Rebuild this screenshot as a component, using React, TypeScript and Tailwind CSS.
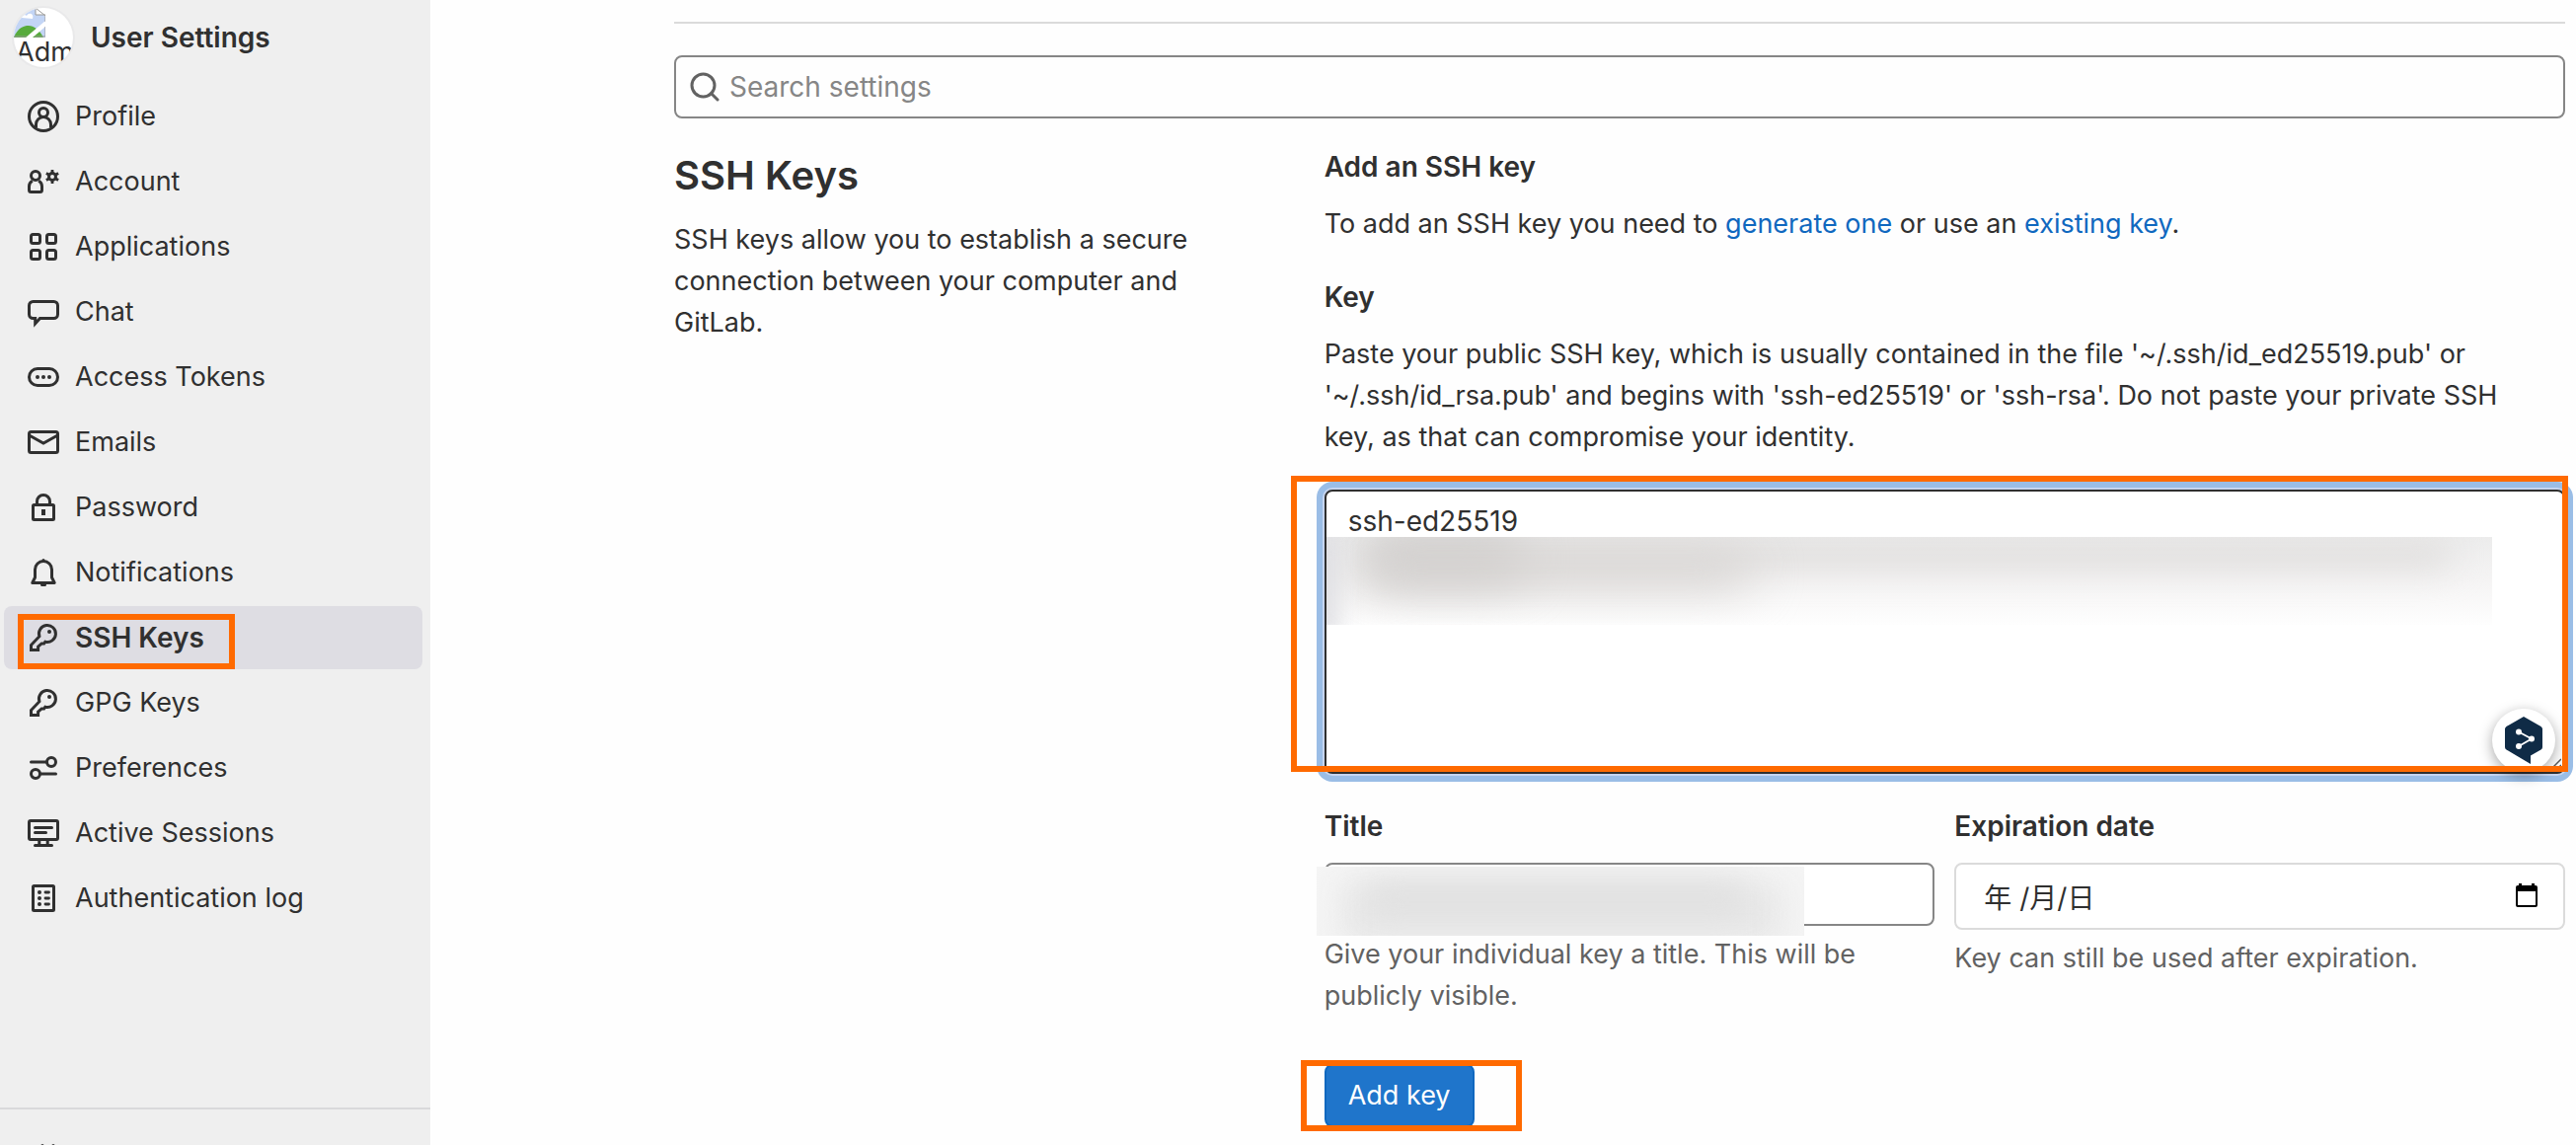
import type { ReactNode } from "react";

type NavItem = { label: string; icon: ReactNode; active?: boolean };

function Icon({ children }: { children: ReactNode }) {
  return (
    <svg
      viewBox="0 0 16 16"
      className="size-8 shrink-0"
      fill="none"
      stroke="currentColor"
      strokeWidth="1.5"
      aria-hidden="true"
    >
      {children}
    </svg>
  );
}

const keyIcon = (
  <Icon>
    <path d="M5.95 7.35A4.25 4.25 0 1 1 8.9 10.1L8.3 11H7.1L5.3 12.6V14.25H1.75V11.75L5.95 7.35Z" />
    <circle cx="11" cy="5" r="1" fill="currentColor" stroke="none" />
  </Icon>
);

const navItems: NavItem[] = [
  {
    label: "Profile",
    icon: (
      <Icon>
        <circle cx="8" cy="8" r="7.25" />
        <circle cx="8" cy="6" r="2.25" />
        <path d="M4.25 13.75V12a3.75 3.75 0 0 1 7.5 0v1.75" />
      </Icon>
    ),
  },
  {
    label: "Account",
    icon: (
      <Icon>
        <circle cx="4" cy="5" r="2.25" />
        <path d="M2.4 7.6A3.25 3.25 0 0 0 .75 10.5v1.75a1 1 0 0 0 1 1h4.5a1 1 0 0 0 1-1V10.5A3.25 3.25 0 0 0 5.6 7.6" />
        <circle cx="12.5" cy="5.5" r="1.75" />
        <path strokeWidth="1.4" d="M12.5 2v1.5M12.5 7.5V9M9.45 3.75l1.3.75M14.25 6.5l1.3.75M9.45 7.25l1.3-.75M14.25 4.5l1.3-.75" />
      </Icon>
    ),
  },
  {
    label: "Applications",
    icon: (
      <Icon>
        <rect x="1.75" y="1.75" width="4.5" height="4.5" rx="1" />
        <rect x="9.75" y="1.75" width="4.5" height="4.5" rx="1" />
        <rect x="1.75" y="9.75" width="4.5" height="4.5" rx="1" />
        <rect x="9.75" y="9.75" width="4.5" height="4.5" rx="1" />
      </Icon>
    ),
  },
  {
    label: "Chat",
    icon: (
      <Icon>
        <path d="M2.75 2.75h10.5a2 2 0 0 1 2 2v4.5a2 2 0 0 1-2 2H6.25L3.85 13.9v-2.65h-1.1a2 2 0 0 1-2-2v-4.5a2 2 0 0 1 2-2Z" />
      </Icon>
    ),
  },
  {
    label: "Access Tokens",
    icon: (
      <Icon>
        <rect x=".75" y="3.75" width="14.5" height="8.5" rx="4.25" />
        <g fill="currentColor" stroke="none">
          <circle cx="5" cy="8" r="1" />
          <circle cx="8" cy="8" r="1" />
          <circle cx="11" cy="8" r="1" />
        </g>
      </Icon>
    ),
  },
  {
    label: "Emails",
    icon: (
      <Icon>
        <rect x=".75" y="2.75" width="14.5" height="10.5" rx="1" />
        <path d="M1 4.6l7 3.9 7-3.9" />
      </Icon>
    ),
  },
  {
    label: "Password",
    icon: (
      <Icon>
        <rect x="2.75" y="6.75" width="10.5" height="7.5" rx=".5" />
        <path d="M4.75 6.75V5a3.25 3.25 0 0 1 6.5 0v1.75" />
        <rect x="7" y="9" width="2" height="3" fill="currentColor" stroke="none" />
      </Icon>
    ),
  },
  {
    label: "Notifications",
    icon: (
      <Icon>
        <path strokeLinejoin="round" d="M3.75 6.5a4.25 4.25 0 0 1 8.5 0V10.5l1.35 2.75H2.4L3.75 10.5Z" />
        <path strokeLinecap="round" d="M8 1.75V2M7.25 14.25h1.5" />
      </Icon>
    ),
  },
  { label: "SSH Keys", icon: keyIcon, active: true },
  { label: "GPG Keys", icon: keyIcon },
  {
    label: "Preferences",
    icon: (
      <Icon>
        <circle cx="12" cy="5" r="2.25" />
        <circle cx="4" cy="11" r="2.25" />
        <path strokeLinecap="round" d="M1.75 5h8M6.25 11h8" />
      </Icon>
    ),
  },
  {
    label: "Active Sessions",
    icon: (
      <Icon>
        <rect x=".75" y="1.75" width="14.5" height="9.5" rx=".75" />
        <path strokeLinecap="round" d="M3.75 5.25h8.5M3.75 7.75h5.5M3.75 14.25h8.5" />
        <path d="M5.9 11.5v2.5M10.1 11.5v2.5" />
      </Icon>
    ),
  },
  {
    label: "Authentication log",
    icon: (
      <Icon>
        <rect x="2.75" y="1.75" width="10.5" height="12.5" rx=".5" />
        <path strokeLinecap="round" d="M9 5h1.75M9 8h1.75M9 11h1.75" strokeWidth="1.4" />
        <g fill="currentColor" stroke="none">
          <circle cx="6" cy="5" r="1" />
          <circle cx="6" cy="8" r="1" />
          <circle cx="6" cy="11" r="1" />
        </g>
      </Icon>
    ),
  },
];

function Avatar() {
  return (
    <div className="size-[60px] shrink-0 overflow-hidden rounded-full bg-white ring-2 ring-[#e9e9ea]">
      <svg viewBox="0 0 32 30" className="h-[30px] w-8" aria-hidden="true">
        <path d="M0 0H22L32 9V30H0Z" fill="#c3d5f5" />
        <path d="M8 10c0-3 3-4 5-2 2-4 8-2 6 3Z" fill="#fff" />
        <path d="M0 30C4 20 10 18 15 18S26 22 30 30Z" fill="#57ab3c" />
        <path d="M12 30L32 13V19L19 30Z" fill="#fff" />
        <path d="M22 0V7H32" fill="#fff" stroke="#999" />
        <path d="M22 0L32 8V14M32 19V29H21M13 29H0" fill="none" stroke="#999" />
      </svg>
      <span className="block pl-0.5 leading-[30px]">Adm</span>
    </div>
  );
}

function Sidebar() {
  return (
    <aside className="flex w-[436px] shrink-0 flex-col overflow-hidden bg-[#efefef]">
      <div className="flex items-center gap-[18px] px-[14px] pt-2">
        <Avatar />
        <span className="text-[28px] leading-[42px] font-semibold">User Settings</span>
      </div>
      <nav className="mt-[18px] flex flex-1 flex-col gap-0.5 px-1 pr-2" aria-label="User settings">
        {navItems.map((item) => (
          <a
            key={item.label}
            href="#"
            aria-current={item.active ? "page" : undefined}
            className={
              item.active
                ? "relative flex h-16 items-center gap-4 rounded-lg bg-[#dedde3] px-6 text-[28px] font-semibold"
                : "relative flex h-16 items-center gap-4 rounded-lg px-6"
            }
          >
            {item.icon}
            {item.label}
            {item.active && (
              <span className="absolute bottom-0 left-[14px] h-14 w-[220px] border-[6px] border-[#ff6a00]" />
            )}
          </a>
        ))}
      </nav>
      <div className="h-[38px] shrink-0 border-t-2 border-[#d9d9db] px-1 pt-[14px]">
        <button type="button" aria-label="Collapse sidebar" className="flex h-16 items-center px-6">
          <Icon>
            <path strokeLinecap="round" d="M7.5 3.25L2.75 8l4.75 4.75M13 3.25L8.25 8 13 12.75" />
          </Icon>
        </button>
      </div>
    </aside>
  );
}

function AssistantBadge() {
  return (
    <button
      type="button"
      aria-label="Translate"
      className="absolute right-[10px] bottom-0.5 flex size-16 items-center justify-center rounded-full bg-white shadow-[0_4px_14px_rgba(0,0,0,0.35)]"
    >
      <svg viewBox="0 0 38 48" className="h-12 w-[38px]" aria-hidden="true">
        <path
          d="M19 0L36.500 10Q38 11 38 12.500V31Q38 32.500 36.500 33.500L26 39.500V48L1.500 33.500Q0 32.500 0 31V12.500Q0 11 1.500 10Z"
          fill="#0f2b46"
        />
        <path d="M14 15.500L27 22.500L14 30" fill="none" stroke="#fff" strokeWidth="1.800" />
        <g fill="#fff">
          <circle cx="14" cy="15.500" r="3" />
          <circle cx="27" cy="22.500" r="3" />
          <circle cx="14" cy="30" r="3" />
        </g>
      </svg>
    </button>
  );
}

function KeyField() {
  return (
    <div className="relative mt-8">
      <textarea
        id="key"
        aria-describedby="key-help"
        defaultValue="ssh-ed25519"
        className="block h-72 w-full resize-none rounded-lg border-2 border-[#303030] bg-white px-[22px] py-[9px] text-[28px] leading-[42px] shadow-[0_0_0_2px_#c6d5f0,0_0_0_8px_#9abde6] outline-none"
      />
      <div className="absolute top-12 right-[74px] left-0.5 h-[89px] overflow-hidden bg-gradient-to-b from-[#ececec] via-[#f5f4f4] to-[#fefefe]">
        <div className="absolute top-1 right-10 left-10 h-7 rounded-full bg-[#e0dedd] blur-lg" />
        <div className="absolute top-0 left-10 h-11 w-40 rounded-full bg-[#cbc9c8] blur-xl" />
        <div className="absolute top-4 left-8 h-9 w-[400px] rounded-full bg-[#d6d3d1] blur-xl" />
        <div className="absolute -top-2 -left-5 h-28 w-8 bg-[#dedee2] blur-md" />
      </div>
      <AssistantBadge />
      <svg viewBox="0 0 12 12" className="absolute right-1 bottom-1 size-3 text-[#555]" aria-hidden="true">
        <path d="M1 12L12 1M7 12L12 7" stroke="currentColor" strokeWidth="1.500" />
      </svg>
      <div className="pointer-events-none absolute -top-[14px] -right-[3px] bottom-0.5 -left-[34px] border-[6px] border-[#ff6a00]" />
    </div>
  );
}

function KeyDetails() {
  return (
    <div className="mt-8 grid grid-cols-2 gap-5">
      <div>
        <label htmlFor="title" className="block text-[28px] font-semibold">
          Title
        </label>
        <div className="relative mt-4">
          <input
            id="title"
            type="text"
            aria-describedby="title-help"
            className="block h-16 w-full rounded-lg border-2 border-[#868686] bg-white px-[22px] outline-none"
          />
          <div className="absolute top-1 -left-2 h-[70px] w-[494px] overflow-hidden bg-[#f5f5f5]">
            <div className="absolute top-4 left-6 h-16 w-[450px] bg-[#e8e8e8] blur-lg" />
            <div className="absolute top-4 left-12 h-8 w-[390px] rounded-full bg-[#dfdfdf] blur-lg" />
          </div>
        </div>
        <p id="title-help" className="mt-2 text-[#626262]">
          Give your individual key a title. This will be publicly visible.
        </p>
      </div>
      <div>
        <label htmlFor="expires" className="block text-[28px] font-semibold">
          Expiration date
        </label>
        <div className="relative mt-4">
          <input
            id="expires"
            type="text"
            aria-describedby="expires-help"
            defaultValue="年 /月/日"
            className="block h-[68px] w-full rounded-lg border-2 border-[#dbdbdb] bg-white px-7 text-[28px] outline-none"
          />
          <button
            type="button"
            aria-label="Choose a date"
            className="absolute top-[21px] right-7 flex h-6 w-[22px] items-center justify-center text-black"
          >
            <svg viewBox="0 0 22 24" className="h-6 w-[22px]" aria-hidden="true">
              <path
                fill="currentColor"
                fillRule="evenodd"
                d="M3 0h3v2h10V0h3v2h1q2 0 2 2v18q0 2-2 2H2q-2 0-2-2V4q0-2 2-2h1ZM2 8v14h18V8Z"
              />
            </svg>
          </button>
        </div>
        <p id="expires-help" className="mt-2 text-[#626262]">
          Key can still be used after expiration.
        </p>
      </div>
    </div>
  );
}

export default function App() {
  return (
    <div className="flex h-screen overflow-hidden bg-[#fefefe] font-[Inter,'Noto_Sans_CJK_SC',sans-serif] text-[27px] leading-[42px] text-[#303030]">
      <Sidebar />
      <main className="min-w-0 flex-1 pt-[22px] pr-[11px] pl-[247px]">
        <div className="border-t-2 border-[#dbdbdb] pt-8">
          <div className="relative">
            <svg
              viewBox="0 0 30 30"
              className="absolute top-[17px] left-4 size-[30px] text-[#626262]"
              fill="none"
              stroke="currentColor"
              strokeWidth="3"
              strokeLinecap="round"
              aria-hidden="true"
            >
              <circle cx="13.500" cy="13.500" r="11.500" />
              <path d="M21.500 21.500L28 28" />
            </svg>
            <input
              type="search"
              aria-label="Search settings"
              placeholder="Search settings"
              className="block h-16 w-full rounded-lg border-2 border-[#868686] bg-transparent pr-6 pl-[54px] text-[28px] outline-none placeholder:text-[#868686]"
            />
          </div>
        </div>

        <div className="grid grid-cols-3 gap-[60px] pt-7">
          <section>
            <h1 className="mb-[14px] text-[40px] leading-[60px] font-semibold">SSH Keys</h1>
            <p>SSH keys allow you to establish a secure connection between your computer and GitLab.</p>
          </section>

          <form className="col-span-2" onSubmit={(e) => e.preventDefault()}>
            <h2 className="text-[28px] font-semibold">Add an SSH key</h2>
            <p className="mt-4">
              To add an SSH key you need to{" "}
              <a href="#" className="text-[#1068bf]">
                generate one
              </a>{" "}
              or use an{" "}
              <a href="#" className="text-[#1068bf]">
                existing key
              </a>
              .
            </p>
            <label htmlFor="key" className="mt-8 block text-[28px] font-semibold">
              Key
            </label>
            <p id="key-help" className="mt-4">
              Paste your public SSH key, which is usually contained in the file '~/.ssh/id_ed25519.pub' or
              <br />
              '~/.ssh/id_rsa.pub' and begins with 'ssh-ed25519' or 'ssh-rsa'. Do not paste your private SSH
              <br />
              key, as that can compromise your identity.
            </p>
            <KeyField />
            <KeyDetails />
            <div className="relative mt-12 w-fit">
              <button
                type="submit"
                className="block h-16 rounded-lg border-2 border-[#1068bf] bg-[#1f75cb] px-[22px] text-white"
              >
                Add key
              </button>
              <div className="pointer-events-none absolute -top-1 -left-6 h-[72px] w-56 border-[6px] border-[#ff6a00]" />
            </div>
          </form>
        </div>
      </main>
    </div>
  );
}
